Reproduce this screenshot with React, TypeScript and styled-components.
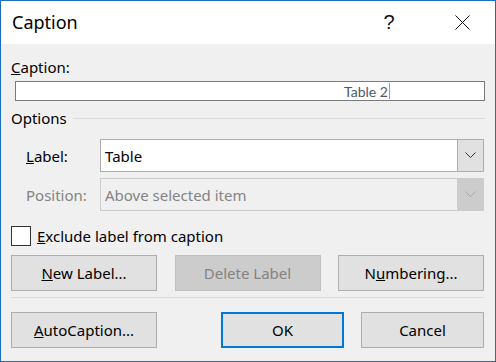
import React from 'react';
import styled, { createGlobalStyle } from 'styled-components';

const GlobalStyle = createGlobalStyle`
    html, body {
        margin: 0;
        padding: 0;
        background: #f0f0f0;
    }
    * {
        box-sizing: border-box;
    }
`;

const Window = styled.div`
    width: 496px;
    height: 362px;
    border: 1px solid #1a6fc0;
    background: #f0f0f0;
    font-family: 'Noto Sans', 'Open Sans', sans-serif;
    font-size: 15px;
    color: #000;
    display: flex;
    flex-direction: column;
`;

const TitleBar = styled.div`
    height: 43px;
    background: #fff;
    display: flex;
    align-items: center;
    padding-left: 11px;
`;

const Title = styled.div`
    flex: 1;
    font-size: 18px;
    line-height: 1;
    margin-top: -1px;
`;

const TitleButton = styled.div<{ $right: number }>`
    width: 46px;
    height: 43px;
    margin-right: ${(p) => p.$right}px;
    display: flex;
    align-items: center;
    justify-content: center;
    font-family: 'Liberation Sans', sans-serif;
    font-size: 20px;
    color: #111;
`;

const Body = styled.div`
    flex: 1;
    padding: 0 11px 0 10px;
    display: flex;
    flex-direction: column;
`;

const FieldLabel = styled.div<{ $top?: number }>`
    margin-top: ${(p) => p.$top ?? 0}px;
    line-height: 20px;
    height: 20px;
`;

const TextInput = styled.div`
    margin: 4px 0 0 4px;
    width: 470px;
    height: 20px;
    border: 1px solid #7a7a7a;
    background: #fff;
    display: flex;
    align-items: center;
    padding-left: 328px;
    font-family: Lato, 'Liberation Sans', sans-serif;
    font-size: 14px;
    color: #4d596b;
`;

const Caret = styled.span`
    display: inline-block;
    width: 1px;
    height: 16px;
    margin-left: 1px;
    background: #9a9a9a;
`;

const GroupHeader = styled.div`
    margin-top: 7px;
    display: flex;
    align-items: center;
    gap: 6px;
    height: 20px;
    line-height: 20px;
`;

const GroupLine = styled.div`
    flex: 1;
    height: 1px;
    background: #dcdcdc;
    margin-right: -1px;
`;

const ComboRow = styled.div<{ $top: number }>`
    margin-top: ${(p) => p.$top}px;
    display: flex;
    align-items: center;
`;

const ComboLabel = styled.div<{ $disabled?: boolean }>`
    width: 89px;
    padding-left: 15px;
    color: ${(p) => (p.$disabled ? '#838383' : '#000')};
`;

const Combo = styled.div<{ $disabled?: boolean }>`
    width: 384px;
    height: 33px;
    display: flex;
    border: 1px solid ${(p) => (p.$disabled ? '#cccccc' : '#adadad')};
    background: ${(p) => (p.$disabled ? '#f0f0f0' : '#fff')};
    color: ${(p) => (p.$disabled ? '#838383' : '#000')};
`;

const ComboText = styled.div`
    flex: 1;
    display: flex;
    align-items: center;
    padding-left: 4px;
`;

const ComboButton = styled.div<{ $disabled?: boolean }>`
    width: 27px;
    margin: -1px -1px -1px 0;
    border: 1px solid ${(p) => (p.$disabled ? '#cccccc' : '#adadad')};
    background: ${(p) => (p.$disabled ? '#cccccc' : '#e1e1e1')};
    display: flex;
    align-items: center;
    justify-content: center;
`;

const CheckRow = styled.label`
    margin-top: 15px;
    display: flex;
    align-items: center;
    gap: 6px;
    height: 20px;
`;

const CheckBox = styled.span`
    width: 20px;
    height: 20px;
    border: 1px solid #333;
    background: #fff;
`;

const ButtonRow = styled.div<{ $top: number }>`
    margin-top: ${(p) => p.$top}px;
    display: flex;
    justify-content: space-between;
`;

const Button = styled.div<{ $width?: number; $disabled?: boolean; $default?: boolean }>`
    width: ${(p) => p.$width ?? 146}px;
    height: 36px;
    display: flex;
    align-items: center;
    justify-content: center;
    background: ${(p) => (p.$disabled ? '#cccccc' : '#e1e1e1')};
    border: ${(p) =>
        p.$default ? '2px solid #0078d7' : `1px solid ${p.$disabled ? '#bfbfbf' : '#adadad'}`};
    color: ${(p) => (p.$disabled ? '#838383' : '#000')};
`;

const Separator = styled.div`
    margin-top: 6px;
    height: 1px;
    background: #dcdcdc;
`;

const Group = styled.div`
    display: flex;
    gap: 17px;
`;

const Chevron: React.FC<{ color: string }> = ({ color }) => (
    <svg width="11" height="7" viewBox="0 0 11 7">
        <path d="M0.5 0.5 L5.5 5.5 L10.5 0.5" fill="none" stroke={color} strokeWidth="1" />
    </svg>
);

const App: React.FC = () => (
    <>
        <GlobalStyle />
        <Window>
            <TitleBar>
                <Title>Caption</Title>
                <TitleButton $right={27}>?</TitleButton>
                <TitleButton $right={10}>
                    <svg width="15" height="15" viewBox="0 0 15 15">
                        <path d="M0.5 0.5 L14.5 14.5 M14.5 0.5 L0.5 14.5" stroke="#111" strokeWidth="1" />
                    </svg>
                </TitleButton>
            </TitleBar>
            <Body>
                <FieldLabel $top={13}>
                    <u>C</u>aption:
                </FieldLabel>
                <TextInput>
                    Table 2<Caret />
                </TextInput>
                <GroupHeader>
                    Options
                    <GroupLine />
                </GroupHeader>
                <ComboRow $top={11}>
                    <ComboLabel>
                        <u>L</u>abel:
                    </ComboLabel>
                    <Combo>
                        <ComboText>Table</ComboText>
                        <ComboButton>
                            <Chevron color="#333" />
                        </ComboButton>
                    </Combo>
                </ComboRow>
                <ComboRow $top={6}>
                    <ComboLabel $disabled>Position:</ComboLabel>
                    <Combo $disabled>
                        <ComboText>Above selected item</ComboText>
                        <ComboButton $disabled>
                            <Chevron color="#a8a8a8" />
                        </ComboButton>
                    </Combo>
                </ComboRow>
                <CheckRow>
                    <CheckBox />
                    <span>
                        <u>E</u>xclude label from caption
                    </span>
                </CheckRow>
                <ButtonRow $top={9}>
                    <Button>
                        <u>N</u>ew Label...
                    </Button>
                    <Button $disabled>Delete Label</Button>
                    <Button>
                        N<u>u</u>mbering...
                    </Button>
                </ButtonRow>
                <Separator />
                <ButtonRow $top={14}>
                    <Button>
                        <u>A</u>utoCaption...
                    </Button>
                    <Group>
                        <Button $width={123} $default>
                            OK
                        </Button>
                        <Button $width={123}>Cancel</Button>
                    </Group>
                </ButtonRow>
            </Body>
        </Window>
    </>
);

export default App;
